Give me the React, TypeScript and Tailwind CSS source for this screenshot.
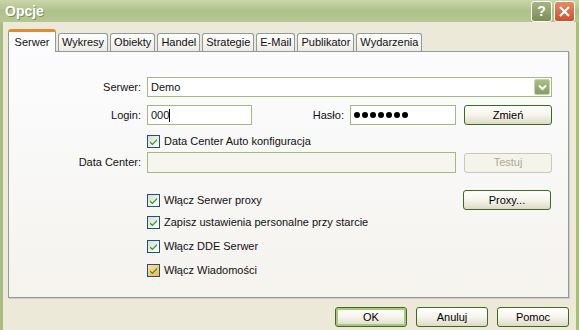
import React from "react";

const font = { fontFamily: '"Liberation Sans", Arial, sans-serif' };

function Check({ hot = false }: { hot?: boolean }) {
  return (
    <span
      className={
        "w-[13px] h-[13px] border border-[#1c5180] flex items-center justify-center shrink-0 " +
        (hot
          ? "bg-gradient-to-br from-[#fde1a1] to-[#f8b548]"
          : "bg-gradient-to-br from-[#dcdcd4] to-[#ffffff]")
      }
    >
      <svg width="9" height="9" viewBox="0 0 9 9">
        <path d="M1 4.2 L3.4 6.6 L8 1.8 L8 3.6 L3.4 8.3 L1 5.9 Z" fill="#21a121" />
      </svg>
    </span>
  );
}

function Btn({
  children,
  w = "w-[88px]",
  disabled = false,
  def = false,
}: {
  children: React.ReactNode;
  w?: string;
  disabled?: boolean;
  def?: boolean;
}) {
  if (disabled)
    return (
      <div
        className={`${w} h-[20px] rounded-[3px] border border-[#cac8bb] bg-[#f5f4ea] text-[#aca899] flex items-center justify-center text-[11px]`}
      >
        {children}
      </div>
    );
  return (
    <div
      className={`${w} h-[20px] rounded-[3px] border border-[#3d6a1e] bg-gradient-to-b from-[#ffffff] via-[#f6f5ec] to-[#dedac6] text-black flex items-center justify-center text-[11px] ${
        def ? "shadow-[inset_0_0_0_2px_#a9c77e]" : ""
      }`}
    >
      {children}
    </div>
  );
}

const tabs = ["Wykresy", "Obiekty", "Handel", "Strategie", "E-Mail", "Publikator", "Wydarzenia"];

export default function App() {
  return (
    <div
      className="w-[579px] h-[330px] bg-[#ece9d8] flex flex-col overflow-hidden text-[11px] text-[#111]"
      style={font}
    >
      <div className="h-[22px] shrink-0 bg-gradient-to-b from-[#cad6ab] via-[#aec18a] to-[#b7c794] flex items-center justify-between pl-[5px] pr-[4px]">
        <span className="text-white font-bold text-[14px] [text-shadow:1px_1px_0_#7e8f5c]">Opcje</span>
        <div className="flex gap-[2px] items-center">
          <div className="w-[21px] h-[21px] rounded-[3px] border border-white bg-gradient-to-b from-[#a6b584] to-[#7b8e55] text-white font-bold text-[14px] flex items-center justify-center">
            ?
          </div>
          <div className="w-[21px] h-[21px] rounded-[3px] border border-white bg-gradient-to-b from-[#e88a63] to-[#c9502c] flex items-center justify-center">
            <svg width="11" height="11" viewBox="0 0 11 11">
              <path d="M1 1 L10 10 M10 1 L1 10" stroke="white" strokeWidth="2.2" />
            </svg>
          </div>
        </div>
      </div>
      <div className="flex-1 flex flex-col border-l-[3px] border-r-[3px] border-[#a9bd83] pl-[5px] pr-[7px]">
        <div className="flex items-end h-[29px] pt-[7px]">
          <div className="w-[48px] bg-[#fcfcfe] border border-b-0 border-[#919b9c] border-t-[3px] border-t-[#e68b2c] rounded-t-[3px] flex items-center justify-center relative z-10 -mb-[1px] h-[23px]">
            Serwer
          </div>
          {tabs.map((t) => (
            <div
              key={t}
              className="h-[18px] ml-[2px] px-[3px] border border-b-0 border-[#919b9c] rounded-t-[3px] bg-gradient-to-b from-[#ffffff] to-[#ecebe5] flex items-center"
            >
              {t}
            </div>
          ))}
        </div>
        <div className="h-[247px] border border-[#919b9c] bg-gradient-to-b from-[#fcfcfe] to-[#f4f3ee] shadow-[1px_1px_0_#d0cebf] flex flex-col pt-[25px]">
          <div className="flex items-center h-[20px]">
            <span className="w-[132px] text-right">Serwer:</span>
            <div className="ml-[6px] w-[405px] h-[20px] border border-[#a4b97f] bg-white flex items-center justify-between pl-[3px] pr-[1px]">
              <span>Demo</span>
              <div className="w-[16px] h-[16px] rounded-[2px] bg-gradient-to-b from-[#aebd8d] to-[#869c5e] border border-[#c6d1ae] flex items-center justify-center">
                <svg width="9" height="7" viewBox="0 0 9 7">
                  <path d="M1 1.5 L4.5 5 L8 1.5" stroke="white" strokeWidth="2" fill="none" />
                </svg>
              </div>
            </div>
          </div>
          <div className="flex items-center h-[20px] mt-[8px]">
            <span className="w-[132px] text-right">Login:</span>
            <div className="ml-[6px] w-[105px] h-[20px] border border-[#a4b97f] bg-white flex items-center pl-[3px]">
              000<span className="w-px h-[13px] bg-black" />
            </div>
            <span className="w-[92px] text-right">Hasło:</span>
            <div className="ml-[6px] w-[106px] h-[20px] border border-[#a4b97f] bg-white flex items-center pl-[3px] gap-[2px]">
              {Array.from({ length: 7 }).map((_, i) => (
                <span key={i} className="w-[6px] h-[6px] rounded-full bg-black" />
              ))}
            </div>
            <div className="ml-[8px]">
              <Btn>Zmień</Btn>
            </div>
          </div>
          <div className="flex items-center h-[14px] mt-[9px] pl-[138px] gap-[4px]">
            <Check />
            <span>Data Center Auto konfiguracja</span>
          </div>
          <div className="flex items-center h-[21px] mt-[4px]">
            <span className="w-[132px] text-right">Data Center:</span>
            <div className="ml-[6px] w-[309px] h-[21px] border border-[#a4b97f] bg-[#f6f5ef]" />
            <div className="ml-[8px]">
              <Btn disabled>Testuj</Btn>
            </div>
          </div>
          <div className="flex items-center h-[20px] mt-[17px] pl-[138px]">
            <div className="flex items-center gap-[4px] w-[316px]">
              <Check />
              <span>Włącz Serwer proxy</span>
            </div>
            <Btn>Proxy...</Btn>
          </div>
          <div className="flex items-center h-[14px] mt-[5px] pl-[138px] gap-[4px]">
            <Check />
            <span>Zapisz ustawienia personalne przy starcie</span>
          </div>
          <div className="flex items-center h-[14px] mt-[10px] pl-[138px] gap-[4px]">
            <Check />
            <span>Włącz DDE Serwer</span>
          </div>
          <div className="flex items-center h-[14px] mt-[10px] pl-[138px] gap-[4px]">
            <Check hot />
            <span>Włącz Wiadomości</span>
          </div>
        </div>
        <div className="flex justify-end gap-[9px] mt-[9px]">
          <Btn w="w-[72px]" def>OK</Btn>
          <Btn w="w-[72px]">Anuluj</Btn>
          <Btn w="w-[72px]">Pomoc</Btn>
        </div>
      </div>
    </div>
  );
}
